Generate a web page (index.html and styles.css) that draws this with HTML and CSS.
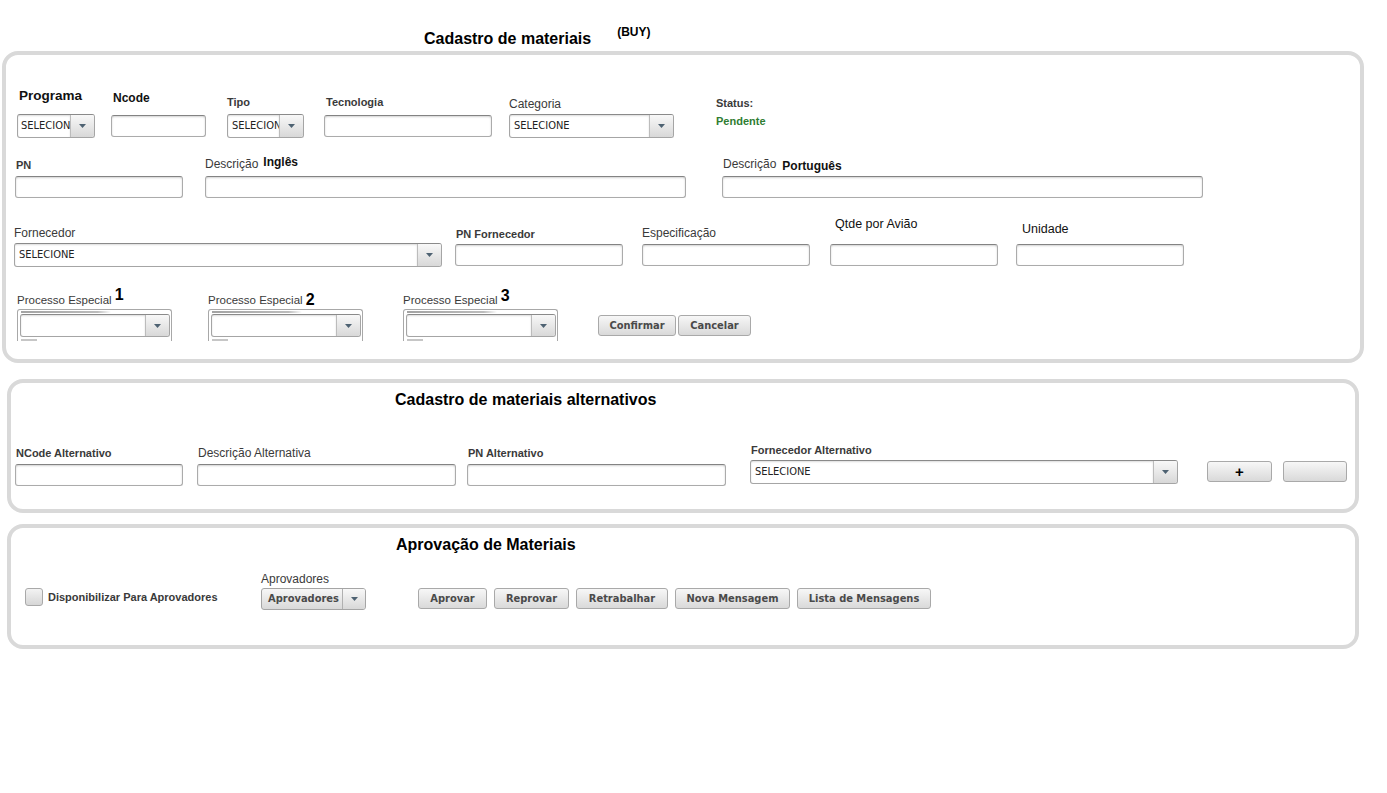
FILE: index.html
```html
<!DOCTYPE html>
<html lang="pt">
<head>
<meta charset="utf-8">
<title>Cadastro de materiais</title>
<link rel="stylesheet" href="styles.css">
</head>
<body>
<div class="page">
  <header class="head">
    <h1 class="title">Cadastro de materiais</h1>
    <span class="buy">(BUY)</span>
  </header>

  <section class="panel p1">
    <div class="row r1">
      <div class="field w78">
        <label class="lbl prog pl2">Programa</label>
        <div class="slot"><div class="select"><span class="sel-text pl3">SELECIONE</span><span class="sel-btn"><svg width="7" height="4" viewBox="0 0 7 4"><path d="M0 0H7L3.5 4Z"/></svg></span></div></div>
      </div>
      <div class="field w95 ml16">
        <label class="lbl ncode pl2">Ncode</label>
        <div class="slot"><input class="input" type="text"></div>
      </div>
      <div class="field w77 ml21">
        <label class="lbl b mb5">Tipo</label>
        <div class="slot"><div class="select"><span class="sel-text">SELECIONE</span><span class="sel-btn"><svg width="7" height="4" viewBox="0 0 7 4"><path d="M0 0H7L3.5 4Z"/></svg></span></div></div>
      </div>
      <div class="field w168 ml20">
        <label class="lbl b mb5 pl2">Tecnologia</label>
        <div class="slot"><input class="input" type="text"></div>
      </div>
      <div class="field w165 ml17">
        <label class="lbl mb35">Categoria</label>
        <div class="slot"><div class="select"><span class="sel-text">SELECIONE</span><span class="sel-btn"><svg width="7" height="4" viewBox="0 0 7 4"><path d="M0 0H7L3.5 4Z"/></svg></span></div></div>
      </div>
      <div class="field ml41">
        <label class="lbl b mb4 pl1">Status:</label>
        <div class="slot slot-top"><span class="pendente">Pendente</span></div>
      </div>
    </div>

    <div class="row r2">
      <div class="field w168">
        <label class="lbl b mb35 pl1">PN</label>
        <div class="slot"><input class="input" type="text"></div>
      </div>
      <div class="field w481 ml22">
        <label class="lbl mb4">Descrição<span class="lang up">Inglês</span></label>
        <div class="slot"><input class="input" type="text"></div>
      </div>
      <div class="field w481 ml36">
        <label class="lbl mb4 pl1">Descrição<span class="lang down">Português</span></label>
        <div class="slot"><input class="input" type="text"></div>
      </div>
    </div>

    <div class="row r3">
      <div class="field w428">
        <label class="lbl mb3">Fornecedor</label>
        <div class="slot"><div class="select"><span class="sel-text">SELECIONE</span><span class="sel-btn"><svg width="7" height="4" viewBox="0 0 7 4"><path d="M0 0H7L3.5 4Z"/></svg></span></div></div>
      </div>
      <div class="field w168 ml13">
        <label class="lbl b mb25 pl1">PN Fornecedor</label>
        <div class="slot"><input class="input" type="text"></div>
      </div>
      <div class="field w168 ml19">
        <label class="lbl mb3">Especificação</label>
        <div class="slot"><input class="input" type="text"></div>
      </div>
      <div class="field w168 ml20">
        <label class="lbl big mb11 pl5">Qtde por Avião</label>
        <div class="slot"><input class="input" type="text"></div>
      </div>
      <div class="field w168 ml18">
        <label class="lbl big mb6 pl6">Unidade</label>
        <div class="slot"><input class="input" type="text"></div>
      </div>
    </div>

    <div class="row r4">
      <div class="field w155">
        <label class="lbl pe mb2">Processo Especial <span class="num n1">1</span></label>
        <div class="pe-frame"><div class="pe-shade"></div><div class="select"><span class="sel-text"></span><span class="sel-btn"><svg width="7" height="4" viewBox="0 0 7 4"><path d="M0 0H7L3.5 4Z"/></svg></span></div><div class="pe-bar"></div></div>
      </div>
      <div class="field w155 ml36">
        <label class="lbl pe mb2">Processo Especial <span class="num n2">2</span></label>
        <div class="pe-frame"><div class="pe-shade"></div><div class="select"><span class="sel-text"></span><span class="sel-btn"><svg width="7" height="4" viewBox="0 0 7 4"><path d="M0 0H7L3.5 4Z"/></svg></span></div><div class="pe-bar"></div></div>
      </div>
      <div class="field w155 ml40">
        <label class="lbl pe mb2">Processo Especial <span class="num n3">3</span></label>
        <div class="pe-frame"><div class="pe-shade"></div><div class="select"><span class="sel-text"></span><span class="sel-btn"><svg width="7" height="4" viewBox="0 0 7 4"><path d="M0 0H7L3.5 4Z"/></svg></span></div><div class="pe-bar"></div></div>
      </div>
      <div class="btn-group ml40 mb5">
        <button class="btn w78">Confirmar</button>
        <button class="btn w73">Cancelar</button>
      </div>
    </div>
  </section>

  <section class="panel p2">
    <h2 class="sec-title">Cadastro de materiais alternativos</h2>
    <div class="row ra">
      <div class="field w168">
        <label class="lbl b mb3 pl1">NCode Alternativo</label>
        <div class="slot"><input class="input" type="text"></div>
      </div>
      <div class="field w259 ml14">
        <label class="lbl mb3 pl1">Descrição Alternativa</label>
        <div class="slot"><input class="input" type="text"></div>
      </div>
      <div class="field w259 ml11">
        <label class="lbl b mb3 pl1">PN Alternativo</label>
        <div class="slot"><input class="input" type="text"></div>
      </div>
      <div class="field w428 ml24 fmb3">
        <label class="lbl b mb35 pl1">Fornecedor Alternativo</label>
        <div class="slot"><div class="select"><span class="sel-text">SELECIONE</span><span class="sel-btn"><svg width="7" height="4" viewBox="0 0 7 4"><path d="M0 0H7L3.5 4Z"/></svg></span></div></div>
      </div>
      <button class="btn plus w65 ml29 mb5">+</button>
      <button class="btn w64 ml11 mb5"></button>
    </div>
  </section>

  <section class="panel p3">
    <h2 class="sec-title st3">Aprovação de Materiais</h2>
    <div class="row rb">
      <label class="check-group">
        <span class="check"></span>
        <span class="check-text">Disponibilizar Para Aprovadores</span>
      </label>
      <div class="field w105">
        <label class="lbl mb25">Aprovadores</label>
        <div class="drop-btn"><span class="drop-text">Aprovadores</span><span class="sel-btn"><svg width="7" height="4" viewBox="0 0 7 4"><path d="M0 0H7L3.5 4Z"/></svg></span></div>
      </div>
      <div class="btn-group gap7 ml52 mb1">
        <button class="btn w69">Aprovar</button>
        <button class="btn w75">Reprovar</button>
        <button class="btn w92">Retrabalhar</button>
        <button class="btn w115">Nova Mensagem</button>
        <button class="btn w134">Lista de Mensagens</button>
      </div>
    </div>
  </section>
</div>
</body>
</html>
```
FILE: styles.css
```css
* { box-sizing: border-box; }
html, body { margin: 0; padding: 0; background: #fff; }
body {
  font-family: "Liberation Sans", Arial, sans-serif;
  color: #333;
  width: 1387px;
  height: 793px;
  overflow: hidden;
}
button, input { margin: 0; }

/* header */
.head { display: flex; align-items: flex-start; height: 51px; padding-left: 424px; }
.title { margin: 29.5px 0 0; font-size: 16px; line-height: 18px; font-weight: bold; color: #000; }
.buy { margin: 25px 0 0 26px; font-size: 12px; line-height: 14px; font-weight: bold; color: #000; }

/* panels */
.panel { border: 4px solid #d9d9d9; border-radius: 16px; background: #fff; }
.p1 { margin-left: 2px; width: 1362px; padding: 31px 0 18px; }
.p2 { margin: 16px 0 0 7px; width: 1352px; padding: 7.5px 0 22px; }
.p3 { margin: 11px 0 0 7px; width: 1352px; padding: 7.5px 0 35px; }
.sec-title { margin: 0 0 0 384px; font-size: 16px; line-height: 18px; font-weight: bold; color: #000; }
.sec-title.st3 { margin-left: 385px; }

/* rows */
.row { display: flex; align-items: flex-end; }
.r1 { height: 52px; padding-left: 11px; }
.r2 { height: 61px; padding-left: 9px; }
.r3 { height: 68px; padding-left: 8px; }
.r4 { height: 74px; padding-left: 11px; }
.ra { height: 41px; margin-top: 37.5px; padding-left: 4px; }
.rb { height: 40px; margin-top: 16.5px; padding-left: 14px; }

.field { display: flex; flex-direction: column; flex: none; }

/* buttons (base, before utilities so the utilities win) */
.btn-group { display: flex; flex: none; gap: 2px; }
.btn-group.gap7 { gap: 7px; }
.btn {
  flex: none;
  height: 21px;
  padding: 0;
  border: 1px solid #a9a9a9;
  border-radius: 3px;
  background: linear-gradient(#f7f7f7, #d9d9d9);
  font: bold 11px/19px "DejaVu Sans Condensed", "DejaVu Sans", sans-serif;
  color: #4a4a4a;
  text-align: center;
}
.btn.plus { font: bold 15px/19px "Liberation Sans", Arial, sans-serif; color: #000; }

/* widths */
.w64 { width: 64px; } .w65 { width: 65px; } .w69 { width: 69px; } .w73 { width: 73px; }
.w75 { width: 75px; } .w77 { width: 77px; } .w78 { width: 78px; } .w92 { width: 92px; }
.w95 { width: 95px; } .w105 { width: 105px; } .w115 { width: 115px; } .w134 { width: 134px; }
.w155 { width: 155px; } .w165 { width: 165px; } .w168 { width: 168px; } .w259 { width: 259px; }
.w428 { width: 428px; } .w481 { width: 481px; }

/* offsets */
.ml11 { margin-left: 11px; } .ml13 { margin-left: 13px; } .ml14 { margin-left: 14px; }
.ml16 { margin-left: 16px; } .ml17 { margin-left: 17px; } .ml18 { margin-left: 18px; }
.ml19 { margin-left: 19px; } .ml20 { margin-left: 20px; } .ml21 { margin-left: 21px; }
.ml22 { margin-left: 22px; } .ml24 { margin-left: 24px; } .ml29 { margin-left: 29px; }
.ml36 { margin-left: 36px; } .ml40 { margin-left: 40px; } .ml41 { margin-left: 41px; }
.ml52 { margin-left: 52px; }
.pl1 { padding-left: 1px; } .pl2 { padding-left: 2px; } .pl5 { padding-left: 5px; } .pl6 { padding-left: 6px; }
.mb1 { margin-bottom: 1px; } .mb2 { margin-bottom: 2px; } .mb25 { margin-bottom: 2.5px; }
.mb3 { margin-bottom: 3px; } .mb35 { margin-bottom: 3.5px; } .mb4 { margin-bottom: 4px; }
.mb5 { margin-bottom: 5px; } .mb6 { margin-bottom: 6.3px; } .mb11 { margin-bottom: 10.8px; }
.fmb3 { margin-bottom: 3px; }

/* labels */
.lbl { display: block; font-size: 12px; line-height: 14px; color: #3a3a3a; white-space: nowrap; }
.lbl.b { font-size: 11px; font-weight: bold; }
.lbl.prog { font-size: 13.5px; line-height: 16px; font-weight: bold; color: #111; margin-bottom: 10px; }
.lbl.ncode { font-weight: bold; color: #111; margin-bottom: 9px; }
.lbl.big { font-size: 12.5px; line-height: 15px; color: #111; }
.lbl.pe { font-size: 11.5px; }
.lang { font-size: 12px; font-weight: bold; color: #111; line-height: 0; }
.lang.up { margin-left: 5px; vertical-align: 2px; }
.lang.down { margin-left: 6px; vertical-align: -2px; }
.num { font-size: 16px; font-weight: bold; color: #000; line-height: 0; }
.n1 { vertical-align: 4px; }
.n2 { vertical-align: -1px; }
.n3 { vertical-align: 3px; }
.pendente { font-size: 11px; line-height: 14px; font-weight: bold; color: #2f7d32; padding-left: 1px; }

/* controls */
.slot { height: 24px; display: flex; align-items: center; }
.slot-top { align-items: flex-start; }

.input {
  display: block;
  width: 100%;
  height: 22px;
  padding: 0 4px;
  border: 1px solid #ababab;
  border-top-color: #838383;
  border-radius: 3px;
  background: #fff;
  box-shadow: inset 0 1px 2px rgba(0, 0, 0, 0.18);
  font: 11px "DejaVu Sans Condensed", sans-serif;
}

.select {
  display: flex;
  width: 100%;
  height: 24px;
  border: 1px solid #a5a5a5;
  border-top-color: #8a8a8a;
  border-radius: 3px;
  overflow: hidden;
  background: #fff;
}
.sel-text {
  flex: 1;
  min-width: 0;
  overflow: hidden;
  white-space: nowrap;
  padding-left: 4px;
  font: 11px/22px "DejaVu Sans Condensed", "DejaVu Sans", sans-serif;
  color: #222;
  box-shadow: inset 0 1px 2px rgba(0, 0, 0, 0.14);
}
.sel-text.pl3 { padding-left: 3px; }
.sel-btn {
  flex: none;
  width: 24px;
  display: flex;
  align-items: center;
  justify-content: center;
  border-left: 1px solid #bcbcbc;
  background: linear-gradient(#f8f8f8, #d8d8d8);
}
.sel-btn svg { fill: #4e6272; display: block; }

/* processo especial frame */
.pe-frame {
  height: 32px;
  border: 1px solid #a8a8a8;
  border-bottom: 0;
  border-radius: 3px 3px 0 0;
  padding: 0 1px 0 2px;
  overflow: hidden;
}
.pe-shade {
  height: 2px;
  width: 90px;
  margin: 1px 0 1px 1px;
  background: linear-gradient(to right, #a3a3a3, #bcbcbc 85%, rgba(188, 188, 188, 0));
}
.pe-frame .select { height: 23px; }
.pe-frame .sel-text { line-height: 21px; }
.pe-bar { width: 16px; height: 2px; margin: 2px 0 0 1px; background: #c6c6c6; }

/* approval row */
.check-group { display: flex; align-items: center; width: 236px; flex: none; margin-bottom: 4px; }
.check {
  width: 18px;
  height: 18px;
  flex: none;
  border: 1px solid #a9a9a9;
  border-radius: 3px;
  background: linear-gradient(#f3f3f3, #d6d6d6);
}
.check-text { margin-left: 5px; font-size: 11px; line-height: 14px; font-weight: bold; color: #3a3a3a; white-space: nowrap; }

.drop-btn {
  display: flex;
  height: 22px;
  border: 1px solid #a5a5a5;
  border-radius: 3px;
  overflow: hidden;
  background: linear-gradient(#f7f7f7, #d9d9d9);
}
.drop-text {
  width: 80px;
  flex: none;
  padding-left: 6px;
  font: bold 11px/20px "DejaVu Sans Condensed", "DejaVu Sans", sans-serif;
  color: #4a4a4a;
  white-space: nowrap;
}
.drop-btn .sel-btn { width: auto; flex: 1; border-left-color: #b0b0b0; }
```
